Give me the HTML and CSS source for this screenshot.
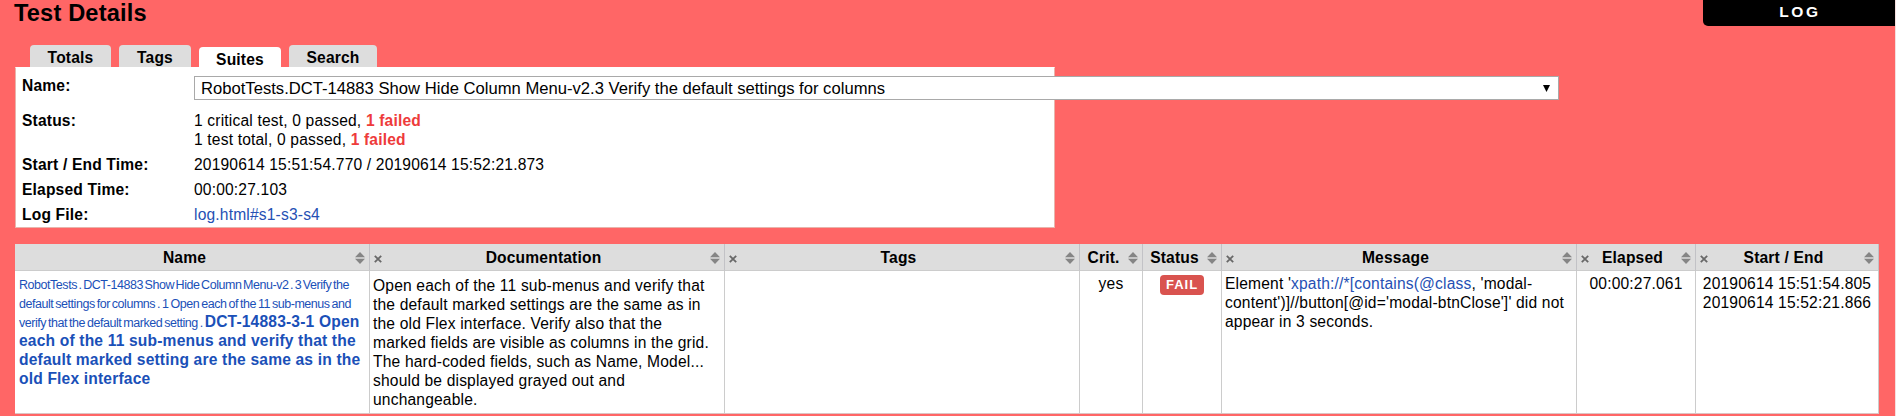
FILE: index.html
```
<!DOCTYPE html>
<html lang="en">
<head>
<meta charset="utf-8">
<title>Test Details</title>
<link rel="stylesheet" href="styles.css">
</head>
<body>
<svg class="defs" aria-hidden="true">
  <symbol id="sort" viewBox="0 0 10 12"><path d="M0 5.2 5 0l5 5.2zM0 6.8h10L5 12z" fill="#858585"/></symbol>
  <symbol id="close" viewBox="0 0 8 8"><path d="M.8.8l6.4 6.4M7.2.8.8 7.2" stroke="#686868" stroke-width="1.8" fill="none"/></symbol>
</svg>
<a class="log-button">LOG</a>
<h2 class="title">Test Details</h2>
<nav class="tabs">
  <span class="tab totals">Totals</span>
  <span class="tab tags">Tags</span>
  <span class="tab active">Suites</span>
  <span class="tab search">Search</span>
</nav>
<section class="panel">
  <div class="row name-row"><b>Name:</b><div class="select"><span>RobotTests.DCT-14883 Show Hide Column Menu-v2.3 Verify the default settings for columns</span><svg class="arrow" viewBox="0 0 8 8"><path d="M0 0h8L4 8z"/></svg></div></div>
  <div class="row status-row"><b>Status:</b><div>1 critical test, 0 passed, <b class="failed">1 failed</b><br>1 test total, 0 passed, <b class="failed">1 failed</b></div></div>
  <div class="row"><b>Start / End Time:</b><div>20190614 15:51:54.770 / 20190614 15:52:21.873</div></div>
  <div class="row"><b>Elapsed Time:</b><div>00:00:27.103</div></div>
  <div class="row"><b>Log File:</b><div><a class="link">log.html#s1-s3-s4</a></div></div>
</section>
<div class="results">
  <div class="th first-th"><span>Name</span><svg class="sort"><use href="#sort"/></svg></div>
  <div class="th"><svg class="close"><use href="#close"/></svg><span>Documentation</span><svg class="sort"><use href="#sort"/></svg></div>
  <div class="th"><svg class="close"><use href="#close"/></svg><span>Tags</span><svg class="sort"><use href="#sort"/></svg></div>
  <div class="th narrow"><span>Crit.</span><svg class="sort"><use href="#sort"/></svg></div>
  <div class="th narrow"><span>Status</span><svg class="sort"><use href="#sort"/></svg></div>
  <div class="th"><svg class="close"><use href="#close"/></svg><span>Message</span><svg class="sort"><use href="#sort"/></svg></div>
  <div class="th"><svg class="close"><use href="#close"/></svg><span>Elapsed</span><svg class="sort"><use href="#sort"/></svg></div>
  <div class="th"><svg class="close"><use href="#close"/></svg><span>Start / End</span><svg class="sort"><use href="#sort"/></svg></div>

  <div class="td name"><span class="path parent">RobotTests . DCT-14883 Show Hide Column Menu-v2 . 3 Verify the</span><br><span class="path">default settings for columns . 1 Open each of the 11 sub-menus and</span><br><span class="path">verify that the default marked setting . </span><b>DCT-14883-3-1 Open<br>each of the 11 sub-menus and verify that the<br>default marked setting are the same as in the<br>old Flex interface</b></div>
  <div class="td doc">Open each of the 11 sub-menus and verify that<br>the default marked settings are the same as in<br>the old Flex interface. Verify also that the<br>marked fields are visible as columns in the grid.<br>The hard-coded fields, such as Name, Model...<br>should be displayed grayed out and<br>unchangeable.</div>
  <div class="td"></div>
  <div class="td center">yes</div>
  <div class="td center"><span class="badge">FAIL</span></div>
  <div class="td">Element '<a class="link">xpath://*[contains(@class</a>, 'modal-<br>content')]//button[@id='modal-btnClose']' did not<br>appear in 3 seconds.</div>
  <div class="td center">00:00:27.061</div>
  <div class="td center">20190614 15:51:54.805<br>20190614 15:52:21.866</div>
</div>
</body>
</html>
```
FILE: styles.css
```
* { box-sizing: border-box; }
body {
  margin: 0;
  height: 416px;
  padding-left: 15px;
  overflow: hidden;
  background: #f66;
  border-right: 1px solid #f5dede;
  color: #000;
  font: 15.6px/19px "Liberation Sans", Helvetica, Arial, sans-serif;
  letter-spacing: 0.17px;
  white-space: nowrap;
}
.defs { position: absolute; width: 0; height: 0; }
.log-button {
  position: absolute;
  top: 0;
  right: 1px;
  width: 192px;
  height: 26px;
  padding-left: 2px;
  border-bottom-left-radius: 5px;
  background: #000;
  color: #fff;
  font-size: 15.5px;
  font-weight: bold;
  line-height: 24px;
  letter-spacing: 2.6px;
  text-align: center;
}
.title { margin: 0 0 0 -1px; height: 45px; font-size: 23.6px; line-height: 26px; }
.tabs { display: flex; height: 22px; padding-left: 15px; gap: 8px; font-weight: bold; }
.tab {
  height: 22px;
  background: #ddd;
  border-radius: 4px 4px 0 0;
  line-height: 26px;
  text-align: center;
}
.totals { width: 81px; }
.tags { width: 72px; }
.active { width: 82px; height: 21px; margin-top: 2px; background: #fff; }
.search { width: 88px; }
.panel {
  display: flex;
  flex-direction: column;
  gap: 6px;
  width: 1040px;
  height: 161px;
  padding: 8px 7px 0 6px;
  background: #fff;
  border: 1px solid #e8b4ac;
  border-top-color: #fff;
}
.row { display: grid; grid-template-columns: 172px 1fr; }
.name-row { height: 23px; margin-bottom: 6px; }
.name-row b { line-height: 20px; }
.select {
  display: flex;
  align-items: center;
  justify-content: space-between;
  width: 1365px;
  height: 24px;
  padding: 0 8px 0 6px;
  border: 1px solid #a9a9a9;
  background: #fff;
  font-size: 16.63px;
  letter-spacing: 0.01px;
}
.arrow { width: 7px; height: 7px; }
.failed { color: #ee3b3b; }
.link { color: #2550b4; }
.results {
  display: grid;
  grid-template-columns: 355px 355px 355px 63px 79px 355px 119px 183px;
  grid-template-rows: 27px 143px;
  width: 1864px;
  margin-top: 16px;
}
.th {
  display: grid;
  grid-template-columns: 8px 1fr 10px;
  align-items: center;
  padding: 1px 4px 0 4px;
  background: #ddd;
  border-right: 1px solid #c2c2c6;
  border-bottom: 1px solid #ccc;
  font-weight: bold;
  text-align: center;
}
.th span { padding-right: 5px; }
.first-th, .narrow { grid-template-columns: 1fr 10px; }
.close { width: 8px; height: 8px; margin-top: 2px; }
.sort { width: 10px; height: 12px; }
.td { padding: 3px 3px 0; background: #fff; border-right: 1px solid #ccc; border-bottom: 1px solid #ddc4c4; }
.name { padding-left: 4px; color: #1a50b8; }
.path { font-size: 12.5px; line-height: 0; letter-spacing: -0.46px; word-spacing: -1.05px; }
.parent { word-spacing: -1.4px; }
.doc { padding-top: 5px; }
.center { text-align: center; }
.badge {
  display: block;
  width: 44px;
  height: 20px;
  margin: 1px auto 0;
  border-radius: 4px;
  background: #d9534f;
  color: #fff;
  font-size: 13px;
  font-weight: bold;
  line-height: 20px;
  letter-spacing: 1px;
}
```
